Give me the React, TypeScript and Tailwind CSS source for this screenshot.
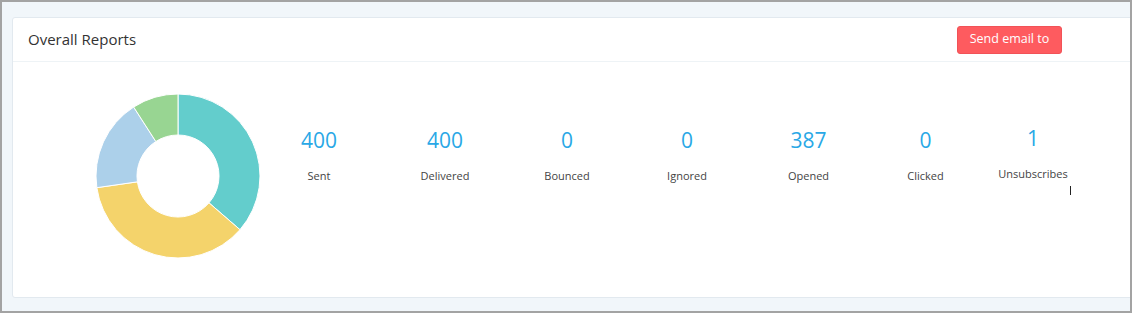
import React from 'react';

const segments = [
  { value: 400, color: '#63cdcc' },
  { value: 400, color: '#f4d36b' },
  { value: 200, color: '#acd0ea' },
  { value: 100, color: '#98d592' },
];

const stats = [
  { value: 400, label: 'Sent', w: 'w-[128px]' },
  { value: 400, label: 'Delivered', w: 'w-[124px]' },
  { value: 0, label: 'Bounced', w: 'w-[120px]' },
  { value: 0, label: 'Ignored', w: 'w-[120px]' },
  { value: 387, label: 'Opened', w: 'w-[123px]' },
  { value: 0, label: 'Clicked', w: 'w-[111px]' },
  { value: 1, label: 'Unsubscribes', w: 'w-[104px] -mt-[2px]' },
];

function arcPath(start: number, end: number, R: number, r: number, c: number) {
  const pt = (a: number, rad: number) => {
    const t = a * Math.PI * 2 - Math.PI / 2;
    return [c + rad * Math.cos(t), c + rad * Math.sin(t)];
  };
  const large = end - start > 0.5 ? 1 : 0;
  const [x1, y1] = pt(start, R);
  const [x2, y2] = pt(end, R);
  const [x3, y3] = pt(end, r);
  const [x4, y4] = pt(start, r);
  return `M${x1} ${y1} A${R} ${R} 0 ${large} 1 ${x2} ${y2} L${x3} ${y3} A${r} ${r} 0 ${large} 0 ${x4} ${y4} Z`;
}

function Donut() {
  const total = segments.reduce((s, x) => s + x.value, 0);
  let acc = 0;
  return (
    <svg width="166" height="166" viewBox="0 0 166 166">
      {segments.map((s, i) => {
        const start = acc / total;
        acc += s.value;
        const end = acc / total;
        return <path key={i} d={arcPath(start, end, 82, 41, 83)} fill={s.color} stroke="#fff" strokeWidth="1" />;
      })}
    </svg>
  );
}

export default function App() {
  return (
    <div className="w-[1134px] h-[315px] bg-white" style={{ fontFamily: '"Open Sans", "Noto Sans", sans-serif' }}>
      <div className="relative w-[1132px] h-[313px] border-2 border-[#a3a3a3] bg-[#f1f6fa] overflow-hidden pt-[15px] pl-[10px]">
        <div className="w-[1140px] h-[281px] bg-white border border-[#e2e9ef] rounded-[3px] flex flex-col">
          {/* Header */}
          <div className="h-[44px] flex items-center pl-[15px] pr-[89px] border-b border-[#eef3f6]">
            <h2 className="text-[15px] text-[#333] leading-none">Overall Reports</h2>
            <button className="ml-auto w-[105px] h-[28px] rounded-[3px] bg-[#fe5b5f] border border-[#f15257] text-white text-[12.5px] leading-none">
              Send email to
            </button>
          </div>

          {/* Body */}
          <div className="flex items-start pl-[82px] pt-[31px]">
            <Donut />
            <div className="flex items-start pt-[33px] -ml-[6px]">
              {stats.map((s) => (
                <div key={s.label} className={`${s.w} flex flex-col items-center`}>
                  <div className="text-[21px] leading-[28px] text-[#29a8e6]">{s.value}</div>
                  <div className="mt-[14px] text-[11px] leading-[16px] text-[#444]">{s.label}</div>
                </div>
              ))}
            </div>
          </div>
        </div>
        <div className="absolute left-[1068px] top-[184px] w-[1px] h-[9px] bg-[#222]" />
      </div>
    </div>
  );
}
